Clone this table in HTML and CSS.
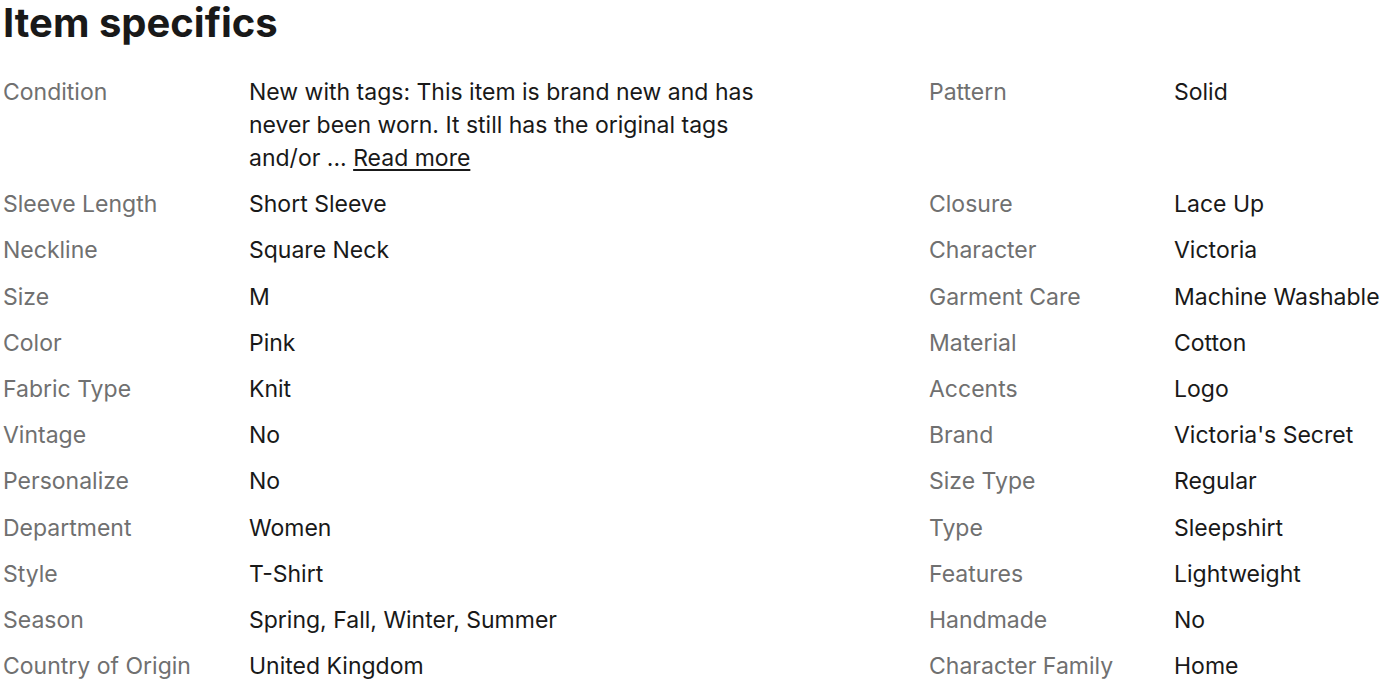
FILE: index.html
```html
<!DOCTYPE html>
<html lang="en">
<head>
<meta charset="utf-8">
<title>Item specifics</title>
<link rel="stylesheet" href="styles.css">
</head>
<body>
<section class="specifics">
  <h2 class="title">Item specifics</h2>
  <div class="grid">
    <div class="label">Condition</div>
    <div class="value"><span class="wrap">New with tags: This item is brand new and has never been worn. It still has the original tags and/or ... <a class="more" href="#">Read more</a></span></div>
    <div class="label">Pattern</div>
    <div class="value">Solid</div>

    <div class="label">Sleeve Length</div>
    <div class="value">Short Sleeve</div>
    <div class="label">Closure</div>
    <div class="value">Lace Up</div>

    <div class="label">Neckline</div>
    <div class="value">Square Neck</div>
    <div class="label">Character</div>
    <div class="value">Victoria</div>

    <div class="label">Size</div>
    <div class="value">M</div>
    <div class="label">Garment Care</div>
    <div class="value">Machine Washable</div>

    <div class="label">Color</div>
    <div class="value">Pink</div>
    <div class="label">Material</div>
    <div class="value">Cotton</div>

    <div class="label">Fabric Type</div>
    <div class="value">Knit</div>
    <div class="label">Accents</div>
    <div class="value">Logo</div>

    <div class="label">Vintage</div>
    <div class="value">No</div>
    <div class="label">Brand</div>
    <div class="value">Victoria's Secret</div>

    <div class="label">Personalize</div>
    <div class="value">No</div>
    <div class="label">Size Type</div>
    <div class="value">Regular</div>

    <div class="label">Department</div>
    <div class="value">Women</div>
    <div class="label">Type</div>
    <div class="value">Sleepshirt</div>

    <div class="label">Style</div>
    <div class="value">T-Shirt</div>
    <div class="label">Features</div>
    <div class="value">Lightweight</div>

    <div class="label">Season</div>
    <div class="value">Spring, Fall, Winter, Summer</div>
    <div class="label">Handmade</div>
    <div class="value">No</div>

    <div class="label">Country of Origin</div>
    <div class="value">United Kingdom</div>
    <div class="label">Character Family</div>
    <div class="value">Home</div>
  </div>
</section>
</body>
</html>
```

FILE: styles.css
```css
html, body {
  margin: 0;
  padding: 0;
  background: #ffffff;
}

body {
  font-family: Inter, "Open Sans", "Liberation Sans", sans-serif;
  color: #191919;
}

.specifics {
  padding: 0 0 0 3px;
}

.title {
  margin: 0;
  font-size: 40px;
  font-weight: 700;
  line-height: 46px;
  letter-spacing: 0;
  color: #191919;
}

.grid {
  display: grid;
  grid-template-columns: 246px 680px 245px auto;
  row-gap: 13.2px;
  margin-top: 30px;
  font-size: 23px;
  line-height: 33px;
}

.label {
  color: #707070;
}

.value {
  color: #191919;
}

.wrap {
  display: block;
  max-width: 505px;
}

.more {
  color: #191919;
  text-decoration: underline;
  text-underline-offset: 3px;
}
```
